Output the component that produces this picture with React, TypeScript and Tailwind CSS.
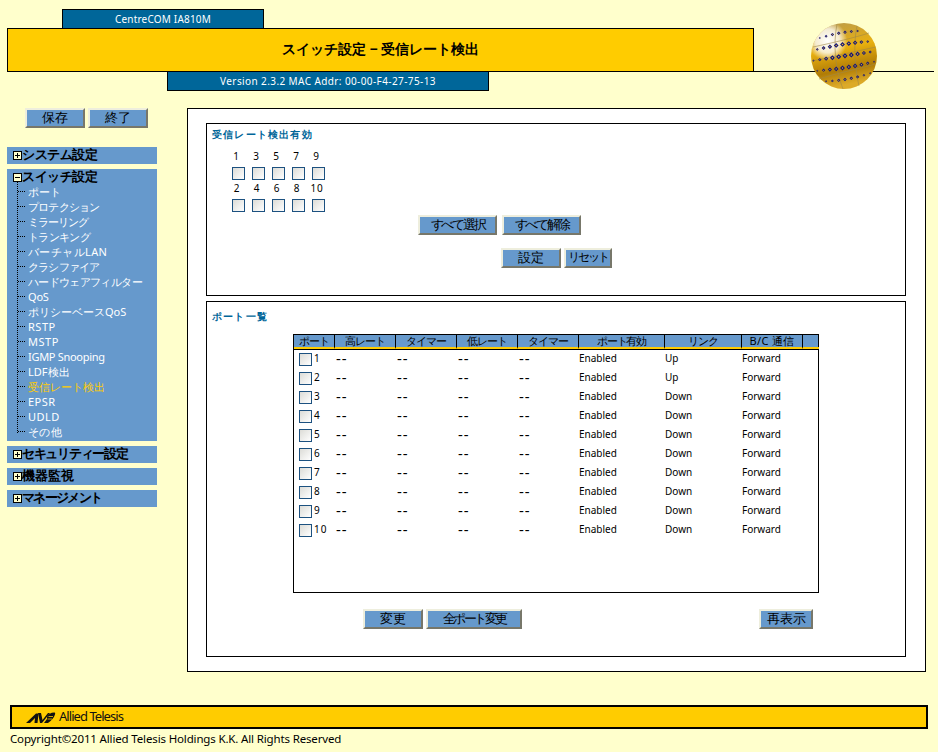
const font = "font-['Liberation_Sans','Noto_Sans_CJK_JP',sans-serif] [font-feature-settings:'palt']";

function Btn({ x, y, w, h = 20, label, track = "text-[13px] tracking-normal" }: { x: number; y: number; w: number; h?: number; label: string; track?: string }) {
  return (
    <button
      style={{ left: x, top: y, width: w, height: h }}
      className={`absolute flex items-center justify-center whitespace-nowrap bg-[#6699cc] border-2 border-t-[#eeeedd] border-l-[#eeeedd] border-r-[#77776a] border-b-[#77776a] leading-none text-black p-0 pb-[2px] ${track}`}
    >
      {label}
    </button>
  );
}

function Check({ x, y }: { x: number; y: number }) {
  return (
    <div
      style={{ left: x, top: y }}
      className="absolute w-[13px] h-[13px] border border-[#1c5180] bg-gradient-to-br from-[#dcdcd7] to-[#ffffff]"
    />
  );
}

function PlusMinus({ minus }: { minus?: boolean }) {
  return (
    <svg width="9" height="9" viewBox="0 0 9 9" className="shrink-0">
      <rect x="0.5" y="0.5" width="8" height="8" fill="#ffffcc" stroke="#000" />
      <path d={minus ? "M2 4.5H7" : "M2 4.5H7M4.5 2V7"} stroke="#000" />
    </svg>
  );
}

function MenuHead({ y, label, minus, track }: { y: number; label: string; minus?: boolean; track: string }) {
  return (
    <div style={{ top: y }} className="absolute left-[13px] flex items-center gap-0 h-[17px] text-[13px] font-bold text-black leading-none">
      <PlusMinus minus={minus} />
      <span className={`pb-[2px] whitespace-nowrap ${track}`}>{label}</span>
    </div>
  );
}

const items: [string, string][] = [
  ["ポート", "tracking-[-0.2px]"],
  ["プロテクション", "tracking-[-0.8px]"],
  ["ミラーリング", "tracking-[-1px]"],
  ["トランキング", "tracking-[-0.7px]"],
  ["バーチャルLAN", "tracking-[0.4px]"],
  ["クラシファイア", "tracking-[-0.8px]"],
  ["ハードウェアフィルター", "tracking-[-0.65px]"],
  ["QoS", "tracking-[-0.2px]"],
  ["ポリシーベースQoS", "tracking-normal"],
  ["RSTP", "tracking-[0.5px]"],
  ["MSTP", "tracking-[0.5px]"],
  ["IGMP Snooping", "tracking-[-0.3px]"],
  ["LDF検出", "tracking-normal"],
  ["受信レート検出", "tracking-normal"],
  ["EPSR", "tracking-[0.5px]"],
  ["UDLD", "tracking-[0.5px]"],
  ["その他", "tracking-[0.4px]"],
];

const heads = ["ポート", "高レート", "タイマー", "低レート", "タイマー", "ポート有効", "リンク", "B/C 通信", ""];
const gridCols = "grid grid-cols-[41px_61px_61px_61px_61px_86px_77px_61px_16px]";

function Globe() {
  const dots: React.ReactElement[] = [];
  const rows = [8, 17, 27, 37, 47, 57, 66];
  rows.forEach((y0, ri) => {
    for (let i = 0; i < 12; i++) {
      const x = 4 + i * 6.3 + (ri % 2) * 2.5;
      const t = (x - 37) / 33;
      const y = y0 - t * 5 + (y0 - 37) * 0.18 * (1 - t * t);
      const d = Math.hypot(x - 37, y - 37);
      if (d > 31.5) continue;
      const s = 2.6 * Math.sqrt(Math.max(0.15, 1 - (d * d) / 1050));
      dots.push(
        <g key={`${ri}-${i}`}>
          <path d={`M${x - s} ${y}L${x} ${y - s}L${x + s} ${y}L${x} ${y + s}Z`} fill="#10127a" />
          <circle cx={x} cy={y} r={s * 0.3} fill="#e6b020" />
        </g>,
      );
    }
  });
  return (
    <svg width="68" height="68" viewBox="3 3 68 68" className="absolute left-[810px] top-[22px]">
      <defs>
        <linearGradient id="base" x1="0" y1="0" x2="0.2" y2="1">
          <stop offset="0" stopColor="#b89a50" />
          <stop offset="0.45" stopColor="#e8b010" />
          <stop offset="0.78" stopColor="#b07c06" />
          <stop offset="1" stopColor="#dcaa28" />
        </linearGradient>
        <radialGradient id="hi" cx="0.25" cy="0.27" r="0.3">
          <stop offset="0" stopColor="#ffffff" />
          <stop offset="0.6" stopColor="#fbf8ee" stopOpacity="0.85" />
          <stop offset="1" stopColor="#ffffff" stopOpacity="0" />
        </radialGradient>
      </defs>
      <circle cx="37" cy="37" r="33" fill="url(#base)" />
      <circle cx="37" cy="37" r="33" fill="url(#hi)" />
      <path d="M5 42C25 38 50 32 69 28M6 28C25 24 50 18 62 14M12 60C30 54 52 50 68 45M30 5C26 25 28 50 36 70M50 7C46 25 48 50 52 67" stroke="#a08848" strokeWidth="0.6" fill="none" />
      {dots}
    </svg>
  );
}

export default function App() {
  return (
    <div className={`relative w-[938px] h-[752px] overflow-hidden bg-[#ffffcc] text-black ${font}`}>
      {/* header */}
      <div className="absolute left-[62px] top-[9px] w-[202px] h-[20px] bg-[#006699] border border-black flex items-center justify-center text-[10px] text-white tracking-[0.2px]">
        CentreCOM IA810M
      </div>
      <div className="absolute left-[7px] right-[4px] top-[71px] h-px bg-black" />
      <div className="absolute left-[167px] top-[71px] w-[322px] h-[20px] bg-[#006699] border border-black flex items-center justify-center text-[10px] text-white tracking-[0.4px]">
        Version 2.3.2 MAC Addr: 00-00-F4-27-75-13
      </div>
      <div className="absolute left-[7px] top-[28px] w-[747px] h-[44px] bg-[#ffcc00] border border-black flex items-center justify-center pb-[3px] text-[14px] font-bold">
        スイッチ設定 − 受信レート検出
      </div>
      <Globe />

      {/* sidebar */}
      <Btn x={25} y={108} w={60} label="保存" />
      <Btn x={88} y={108} w={60} label="終了" />

      <div className="absolute left-[7px] top-[147px] w-[150px] h-[17px] bg-[#6699cc]" />
      <div className="absolute left-[7px] top-[169px] w-[150px] h-[272px] bg-[#6699cc]" />
      <div className="absolute left-[7px] top-[446px] w-[150px] h-[17px] bg-[#6699cc]" />
      <div className="absolute left-[7px] top-[468px] w-[150px] h-[17px] bg-[#6699cc]" />
      <div className="absolute left-[7px] top-[490px] w-[150px] h-[17px] bg-[#6699cc]" />
      <MenuHead y={147} label="システム設定" track="tracking-[-0.5px]" />
      <MenuHead y={169} label="スイッチ設定" minus track="tracking-[-0.5px]" />
      <MenuHead y={446} label="セキュリティー設定" track="tracking-[-1.3px]" />
      <MenuHead y={468} label="機器監視" track="tracking-normal" />
      <MenuHead y={490} label="マネージメント" track="tracking-[-1.7px]" />

      <div className="absolute left-[17px] top-[182px] h-[251px] border-l border-dotted border-black" />
      {items.map(([t, tr], i) => (
        <div key={t} style={{ top: 184 + i * 15 }} className="absolute left-[18px] h-[15px] flex items-center">
          <span className="w-[7px] border-t border-dotted border-black" />
          <span className={`ml-[3px] text-[11px] leading-none whitespace-nowrap ${tr} ${t === "受信レート検出" ? "text-[#ffcc00]" : "text-white"}`}>
            {t}
          </span>
        </div>
      ))}

      {/* main panel */}
      <div className="absolute left-[187px] top-[108px] w-[739px] h-[564px] bg-white border border-black" />
      <div className="absolute left-[206px] top-[123px] w-[700px] h-[173px] border border-black" />
      <div className="absolute left-[206px] top-[301px] w-[700px] h-[356px] border border-black" />

      <div className="absolute left-[212px] top-[127px] text-[10px] leading-[14px] font-bold text-[#006699] tracking-[1.2px]">
        受信レート検出有効
      </div>
      {[1, 3, 5, 7, 9].map((n, i) => (
        <div key={n} style={{ left: 226 + i * 20 }} className="absolute top-[149px] w-[20px] text-center text-[10px] leading-[14px]">
          {n}
        </div>
      ))}
      {[2, 4, 6, 8, 10].map((n, i) => (
        <div key={n} style={{ left: 227 + i * 20 }} className="absolute top-[181px] w-[20px] text-center text-[10px] leading-[14px] tracking-[0.8px]">
          {n}
        </div>
      ))}
      {[0, 1, 2, 3, 4].map((i) => (
        <Check key={`a${i}`} x={232 + i * 20} y={167} />
      ))}
      {[0, 1, 2, 3, 4].map((i) => (
        <Check key={`b${i}`} x={232 + i * 20} y={199} />
      ))}
      <Btn x={418} y={215} w={79} label="すべて選択" track="text-[13px] tracking-[-2.3px]" />
      <Btn x={502} y={215} w={79} label="すべて解除" track="text-[13px] tracking-[-2.3px]" />
      <Btn x={501} y={248} w={60} label="設定" />
      <Btn x={564} y={248} w={48} label="リセット" track="text-[12px] tracking-[-2.2px]" />

      <div className="absolute left-[212px] top-[309px] text-[10px] leading-[14px] font-bold text-[#006699] tracking-[1.2px]">
        ポート一覧
      </div>

      {/* table */}
      <div className="absolute left-[293px] top-[334px] w-[526px] h-[259px] border border-black">
        <div className={`${gridCols} h-[15px] border-b border-black bg-[#6699cc]`}>
          {heads.map((h, i) => (
            <div
              key={i}
              className={`relative flex items-start justify-center whitespace-nowrap text-[11px] leading-[12px] border-b-2 border-[#ffcc00] ${i < 8 ? "border-r border-r-black" : ""} ${i < 7 ? "tracking-[-1.2px]" : "tracking-[0.3px]"}`}
            >
              {h}
            </div>
          ))}
        </div>
        {Array.from({ length: 10 }, (_, i) => (
          <div key={i} style={{ top: 14 + i * 19 }} className={`absolute left-0 ${gridCols} h-[19px] text-[10px] leading-[18px]`}>
            <div className="relative">
              <div className="absolute left-[20px] top-0 text-[10px] tracking-[1px]">{i + 1}</div>
            </div>
            <div className="pl-[1px] tracking-[0.8px] text-[15px]">--</div>
            <div className="pl-[1px] tracking-[0.8px] text-[15px]">--</div>
            <div className="pl-[1px] tracking-[0.8px] text-[15px]">--</div>
            <div className="pl-[1px] tracking-[0.8px] text-[15px]">--</div>
            <div>Enabled</div>
            <div>{i < 2 ? "Up" : "Down"}</div>
            <div>Forward</div>
            <div />
          </div>
        ))}
      </div>
      {Array.from({ length: 10 }, (_, i) => (
        <Check key={`r${i}`} x={299} y={353 + i * 19} />
      ))}

      <Btn x={363} y={609} w={60} label="変更" />
      <Btn x={426} y={609} w={96} label="全ポート変更" track="text-[13px] tracking-[-2.5px]" />
      <Btn x={759} y={609} w={54} label="再表示" />

      {/* footer */}
      <div className="absolute left-[10px] top-[705px] w-[918px] h-[24px] bg-[#ffcc00] border-2 border-black flex items-center">
        <svg width="30" height="11" viewBox="0 0 30 11" className="ml-[14px] shrink-0">
          <path d="M0 11L10 1.5H12.5L11.5 11H8.5L9 6L4 11Z" fill="#111" />
          <path d="M12 1H15L16.5 8L22 1H24L16 11H14Z" fill="#111" />
          <path d="M21 5C22 2 25 0.5 28 0.5C29 0.5 29.5 1 29 2.5C28 6 25 9 22 11H18L21 7Z" fill="#111" />
          <path d="M22.5 4.5H27M21.5 7H26" stroke="#ffcc00" strokeWidth="0.8" />
        </svg>
        <span className="ml-[3px] pb-[1px] text-[13px] leading-none tracking-[-0.95px] text-[#111]">Allied Telesis</span>
      </div>
      <div className="absolute left-[10px] top-[732px] text-[11.5px] leading-[14px] tracking-[-0.15px] whitespace-nowrap">
        Copyright©2011 Allied Telesis Holdings K.K. All Rights Reserved
      </div>
    </div>
  );
}
